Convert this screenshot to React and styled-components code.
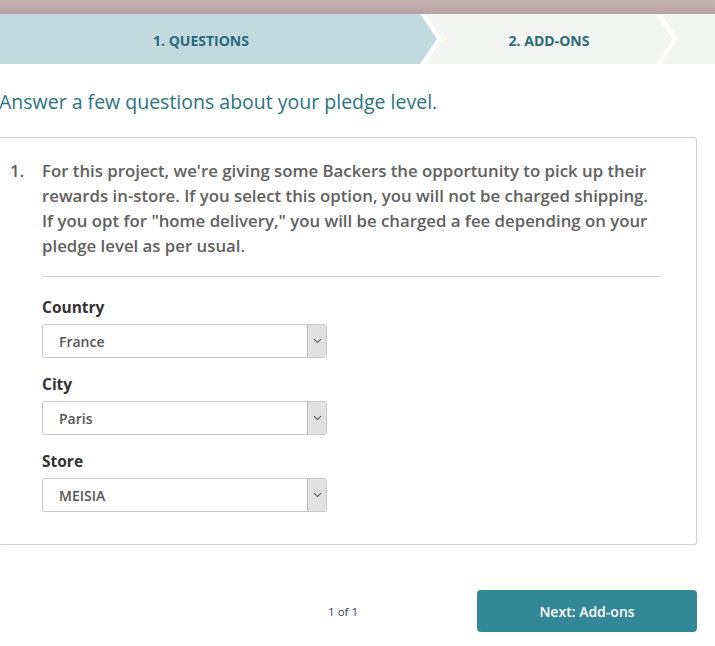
import React from 'react'
import styled, { createGlobalStyle } from 'styled-components'

const GlobalStyle = createGlobalStyle`
  html, body {
    margin: 0;
    padding: 0;
    background: #fff;
    overflow: hidden;
  }
  body {
    font-family: "Open Sans", "Liberation Sans", sans-serif;
    width: 715px;
  }
`

const steps = [
  { label: '1. QUESTIONS', active: true },
  { label: '2. ADD-ONS' },
  { label: '' },
]

const fields = [
  { label: 'Country', value: 'France' },
  { label: 'City', value: 'Paris' },
  { label: 'Store', value: 'MEISIA' },
]

const Chevron = () => (
  <svg width="9" height="6" viewBox="0 0 9 6">
    <path d="M1 1.2 L4.5 4.6 L8 1.2" fill="none" stroke="#555" strokeWidth="1.1" />
  </svg>
)

const App = () => {
  return (
    <Page>
      <GlobalStyle />
      <TopBar />
      <StepBar>
        {steps.map((s, i) => (
          <Step key={i} $index={i} $active={s.active}>
            {s.label}
          </Step>
        ))}
      </StepBar>
      <Main>
        <Heading>Answer a few questions about your pledge level.</Heading>
        <Card>
          <Question>
            <Number>1.</Number>
            <QuestionBody>
              <QuestionText>
                For this project, we're giving some Backers the opportunity to pick up their
                rewards in-store. If you select this option, you will not be charged shipping.
                If you opt for "home delivery," you will be charged a fee depending on your
                pledge level as per usual.
              </QuestionText>
              <Divider />
              {fields.map((f) => (
                <Field key={f.label}>
                  <Label>{f.label}</Label>
                  <Select>
                    <SelectValue>{f.value}</SelectValue>
                    <SelectArrow>
                      <Chevron />
                    </SelectArrow>
                  </Select>
                </Field>
              ))}
            </QuestionBody>
          </Question>
        </Card>
        <Footer>
          <Pager>1 of 1</Pager>
          <NextButton>Next: Add-ons</NextButton>
        </Footer>
      </Main>
    </Page>
  )
}

export default App

const Page = styled.div`
  width: 715px;
  height: 646px;
  overflow: hidden;
`

const TopBar = styled.div`
  height: 14px;
  background: linear-gradient(#c8b6b6, #b7a2a2);
`

const StepBar = styled.div`
  display: flex;
  height: 50px;
  background: #fff;
`

const Step = styled.div`
  flex: ${(p) => (p.$index === 2 ? '1' : 'none')};
  width: ${(p) => (p.$index === 0 ? '437px' : p.$index === 1 ? '248px' : 'auto')};
  margin-left: ${(p) => (p.$index === 0 ? '0' : '-12px')};
  padding: ${(p) => (p.$index === 0 ? '2px 35px 0 0' : '2px 0 0 0')};
  box-sizing: border-box;
  display: flex;
  align-items: center;
  justify-content: center;
  background: ${(p) => (p.$active ? '#c2d9df' : '#f3f5f3')};
  color: #2b6a78;
  font-size: 14px;
  font-weight: 700;
  clip-path: ${(p) =>
    p.$index === 0
      ? 'polygon(0 0, calc(100% - 17px) 0, 100% 50%, calc(100% - 17px) 100%, 0 100%)'
      : p.$index === 1
      ? 'polygon(0 0, calc(100% - 17px) 0, 100% 50%, calc(100% - 17px) 100%, 0 100%, 17px 50%)'
      : 'polygon(0 0, 100% 0, 100% 100%, 0 100%, 17px 50%)'};
`

const Main = styled.div`
  margin-left: -2px;
  width: 699px;
`

const Heading = styled.h1`
  margin: 0;
  padding: 25px 0 0 1px;
  height: 48px;
  box-sizing: content-box;
  font-size: 19.5px;
  font-weight: 400;
  line-height: 26px;
  color: #2a7383;
`

const Card = styled.div`
  border: 1px solid #cfcfcf;
  border-radius: 3px;
  padding: 20px 35px 32px 11px;
`

const Question = styled.div`
  display: flex;
`

const Number = styled.div`
  width: 32px;
  flex: none;
  font-size: 16.8px;
  font-weight: 600;
  line-height: 25px;
  color: #606060;
`

const QuestionBody = styled.div`
  flex: 1;
`

const QuestionText = styled.p`
  margin: 0;
  font-size: 16.8px;
  font-weight: 600;
  line-height: 25px;
  color: #606060;
`

const Divider = styled.div`
  height: 1px;
  background: #d2d2d2;
  margin: 18px 0 18px;
`

const Field = styled.div`
  margin-bottom: 14px;
  &:last-child {
    margin-bottom: 0;
  }
`

const Label = styled.div`
  font-size: 15.5px;
  font-weight: 700;
  line-height: 24px;
  color: #333;
  margin-bottom: 5px;
`

const Select = styled.div`
  width: 285px;
  height: 34px;
  box-sizing: border-box;
  border: 1px solid #c8c8c8;
  border-radius: 3px;
  display: flex;
  align-items: stretch;
  overflow: hidden;
`

const SelectValue = styled.div`
  flex: 1;
  display: flex;
  align-items: center;
  padding-left: 16px;
  font-size: 14px;
  font-weight: 600;
  color: #555;
`

const SelectArrow = styled.div`
  width: 18px;
  border-left: 1px solid #b8b8b8;
  background: #e2e2e2;
  display: flex;
  align-items: center;
  justify-content: center;
`

const Footer = styled.div`
  display: flex;
  justify-content: flex-end;
  align-items: center;
  gap: 119px;
  margin-top: 45px;
`

const Pager = styled.div`
  font-size: 11.5px;
  color: #2c3a55;
`

const NextButton = styled.button`
  width: 220px;
  height: 42px;
  border: none;
  border-radius: 4px;
  background: #338897;
  color: #fff;
  font-family: inherit;
  font-size: 14px;
  font-weight: 600;
  cursor: pointer;
`
